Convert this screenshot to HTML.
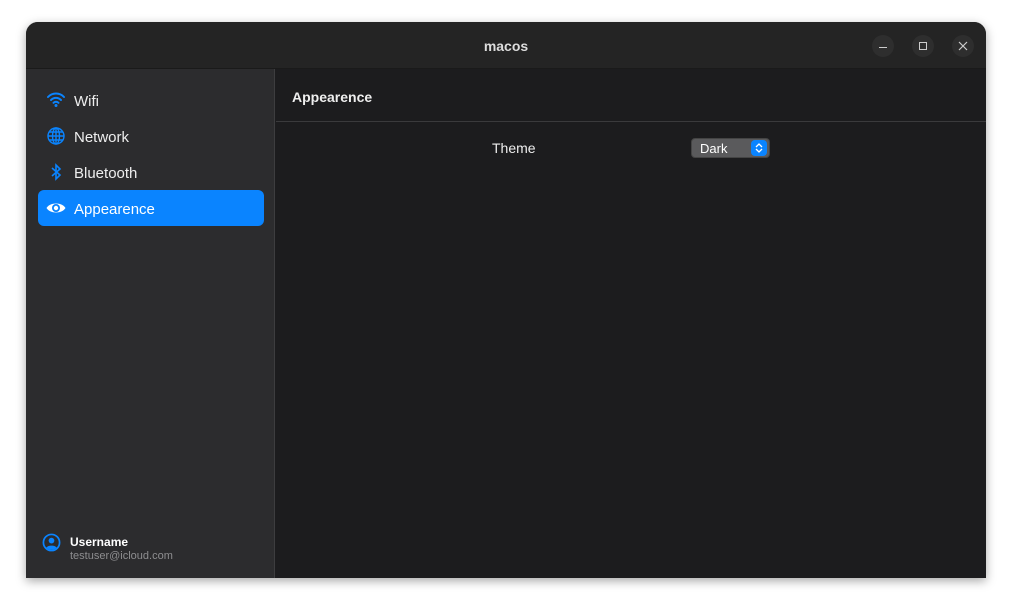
<!DOCTYPE html>
<html><head><meta charset="utf-8"><style>
*{margin:0;padding:0;box-sizing:border-box}
body{width:1012px;height:607px;background:#fff;font-family:"Liberation Sans",sans-serif;position:relative;overflow:hidden}
.win{position:absolute;left:26px;top:22px;width:960px;height:556px;border-radius:12px 12px 0 0;overflow:hidden;background:#1c1c1e;box-shadow:0 3px 10px rgba(0,0,0,.35)}
.title{position:absolute;left:0;top:0;width:960px;height:47px;background:#242424;border-bottom:1px solid #1a1a1a}
.title .t{position:absolute;left:0;right:0;top:16px;text-align:center;color:#ddd;font-weight:bold;font-size:14px}
.wb{position:absolute;top:13px;width:22px;height:22px;border-radius:50%;background:#2e2e2e}
.side{position:absolute;left:0;top:47px;width:249px;height:509px;background:#2c2c2e;border-right:1px solid #3d3d3f}
.item{position:absolute;left:12px;width:226px;height:36px;border-radius:6px;color:#eee;font-size:15px}
.item span{position:absolute;left:36px;top:11px}
.item svg{position:absolute;left:8px;top:8px}
.sel{background:#0a84ff;color:#fff}
.hdr{position:absolute;left:250px;top:47px;width:710px;height:53px;border-bottom:1px solid #3a3a3c;background:#1c1c1e}
.hdr span{position:absolute;left:16px;top:20px;color:#eee;font-weight:bold;font-size:14px}
</style></head><body>
<div class="win">
<div class="title"><div class="t">macos</div>
<div class="wb" style="left:846px"><div style="position:absolute;left:7px;top:12px;width:8px;height:1px;background:#ccc"></div></div>
<div class="wb" style="left:886px"><div style="position:absolute;left:7px;top:7px;width:8px;height:8px;border:1px solid #ccc"></div></div>
<div class="wb" style="left:926px"><svg width="22" height="22"><path d="M7 7L15 15M15 7L7 15" stroke="#ccc" stroke-width="1.2"/></svg></div>
</div>
<div class="side">
<div class="item" style="top:13px"><svg width="20" height="20" viewBox="0 0 20 20"><path d="M2 7a11 11 0 0 1 16 0M5 10a7 7 0 0 1 10 0M7.5 12.8a3.5 3.5 0 0 1 5 0" stroke="#0a84ff" stroke-width="2" fill="none" stroke-linecap="round"/><circle cx="10" cy="15.5" r="1.5" fill="#0a84ff"/></svg><span>Wifi</span></div>
<div class="item" style="top:49px"><svg width="20" height="20" viewBox="0 0 20 20" fill="none" stroke="#0a84ff" stroke-width="1.4"><circle cx="10" cy="10" r="8"/><ellipse cx="10" cy="10" rx="3.5" ry="8"/><path d="M2 10h16M3.5 6h13M3.5 14h13M10 2v16"/></svg><span>Network</span></div>
<div class="item" style="top:85px"><svg width="20" height="20" viewBox="0 0 20 20"><path d="M6 6l8 7-4 4V3l4 4-8 7" stroke="#0a84ff" stroke-width="1.6" fill="none"/></svg><span>Bluetooth</span></div>
<div class="item sel" style="top:121px"><svg width="20" height="20" viewBox="0 0 20 20"><path d="M0.5 10C4 4 16 4 19.5 10C16 16 4 16 0.5 10Z" fill="#fff"/><circle cx="10" cy="10" r="4" fill="#0a84ff"/><circle cx="10" cy="10" r="2.2" fill="#fff"/></svg><span>Appearence</span></div>
<svg style="position:absolute;left:16px;top:464px" width="19" height="19" viewBox="0 0 20 20"><circle cx="10" cy="10" r="8.5" fill="none" stroke="#0a84ff" stroke-width="1.8"/><circle cx="10" cy="8" r="3" fill="#0a84ff"/><path d="M4.5 15.5C6 12.5 14 12.5 15.5 15.5A8 8 0 0 1 4.5 15.5Z" fill="#0a84ff"/></svg>
<div style="position:absolute;left:44px;top:466px;color:#fff;font-weight:bold;font-size:12px">Username</div>
<div style="position:absolute;left:44px;top:481px;color:#8e8e90;font-size:11px">testuser@icloud.com</div>
</div>
<div class="hdr"><span>Appearence</span></div>
<div style="position:absolute;left:466px;top:118px;color:#eee;font-size:14px">Theme</div>
<div style="position:absolute;left:665px;top:116px;width:79px;height:20px;border-radius:4px;background:#5a5a5c;border:1px solid #444">
<span style="position:absolute;left:8px;top:2px;color:#fff;font-size:13px">Dark</span>
<div style="position:absolute;right:2px;top:1px;width:16px;height:16px;border-radius:4px;background:#0a84ff"><svg width="16" height="16"><path d="M5 7l3-3 3 3M5 9l3 3 3-3" stroke="#fff" stroke-width="1.3" fill="none"/></svg></div>
</div>
</div>
</body></html>
